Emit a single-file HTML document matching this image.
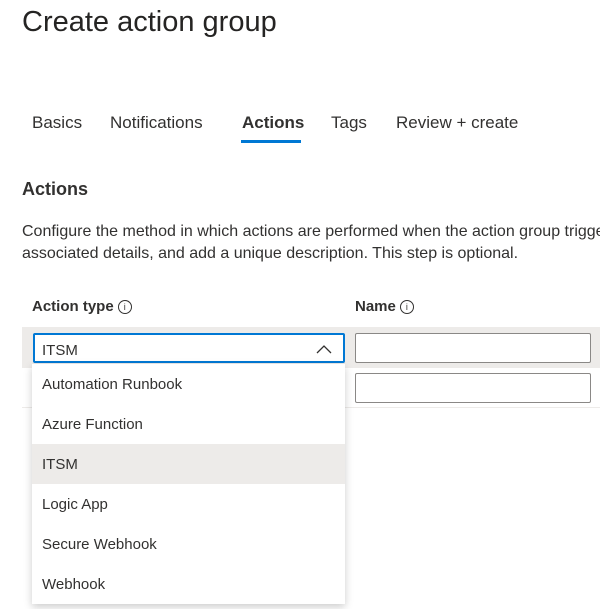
<!DOCTYPE html>
<html><head><style>
body{margin:0;width:600px;height:609px;overflow:hidden;background:#fff;font-family:"Liberation Sans",sans-serif;color:#323130;position:relative}
.a{position:absolute;white-space:nowrap}
.info{display:inline-block;width:12px;height:12px;border:1px solid #323130;border-radius:50%;font-size:9px;line-height:12px;text-align:center;vertical-align:1px;margin-left:4px;font-weight:normal}
.inp{position:absolute;border:1px solid #8a8886;border-radius:2px;background:#fff;box-sizing:border-box}
.item{position:absolute;left:0;width:313px;height:40px;line-height:42px;padding-left:10px;box-sizing:border-box;font-size:15px}
</style></head><body>
<div class="a" style="left:22px;top:6px;font-size:29px;color:#252423">Create action group</div>
<div class="a" style="left:32px;top:113px;font-size:17px">Basics</div>
<div class="a" style="left:110px;top:113px;font-size:17px">Notifications</div>
<div class="a" style="left:242px;top:113px;font-size:17px;font-weight:bold">Actions</div>
<div class="a" style="left:241px;top:140px;width:60px;height:3px;background:#0078d4"></div>
<div class="a" style="left:331px;top:113px;font-size:17px">Tags</div>
<div class="a" style="left:396px;top:113px;font-size:17px">Review + create</div>
<div class="a" style="left:22px;top:179px;font-size:18px;font-weight:bold">Actions</div>
<div class="a" style="left:22px;top:223px;font-size:16px">Configure the method in which actions are performed when the action group triggers.</div>
<div class="a" style="left:22px;top:245px;font-size:16px">associated details, and add a unique description. This step is optional.</div>
<div class="a" style="left:32px;top:298px;font-size:15px;font-weight:bold">Action type<span class="info">i</span></div>
<div class="a" style="left:355px;top:298px;font-size:15px;font-weight:bold">Name<span class="info">i</span></div>
<div class="a" style="left:22px;top:327px;width:578px;height:41px;background:#edebe9"></div>
<div class="inp" style="left:33px;top:333px;width:312px;height:30px;border:2px solid #0078d4"><span class="a" style="left:7px;top:7px;font-size:15px">ITSM</span>
<svg class="a" style="left:281px;top:9px" width="16" height="10"><path d="M1 9 L8 2 L15 9" fill="none" stroke="#323130" stroke-width="1.3"/></svg></div>
<div class="inp" style="left:355px;top:333px;width:236px;height:30px"></div>
<div class="inp" style="left:355px;top:373px;width:236px;height:30px"></div>
<div class="a" style="left:22px;top:407px;width:578px;height:1px;background:#edebe9"></div>
<div class="a" style="left:32px;top:364px;width:313px;height:240px;background:#fff;box-shadow:0 3px 8px rgba(0,0,0,.2)">
<div class="item" style="top:0">Automation Runbook</div>
<div class="item" style="top:40px">Azure Function</div>
<div class="item" style="top:80px;background:#edebe9">ITSM</div>
<div class="item" style="top:120px">Logic App</div>
<div class="item" style="top:160px">Secure Webhook</div>
<div class="item" style="top:200px">Webhook</div>
</div>
</body></html>
